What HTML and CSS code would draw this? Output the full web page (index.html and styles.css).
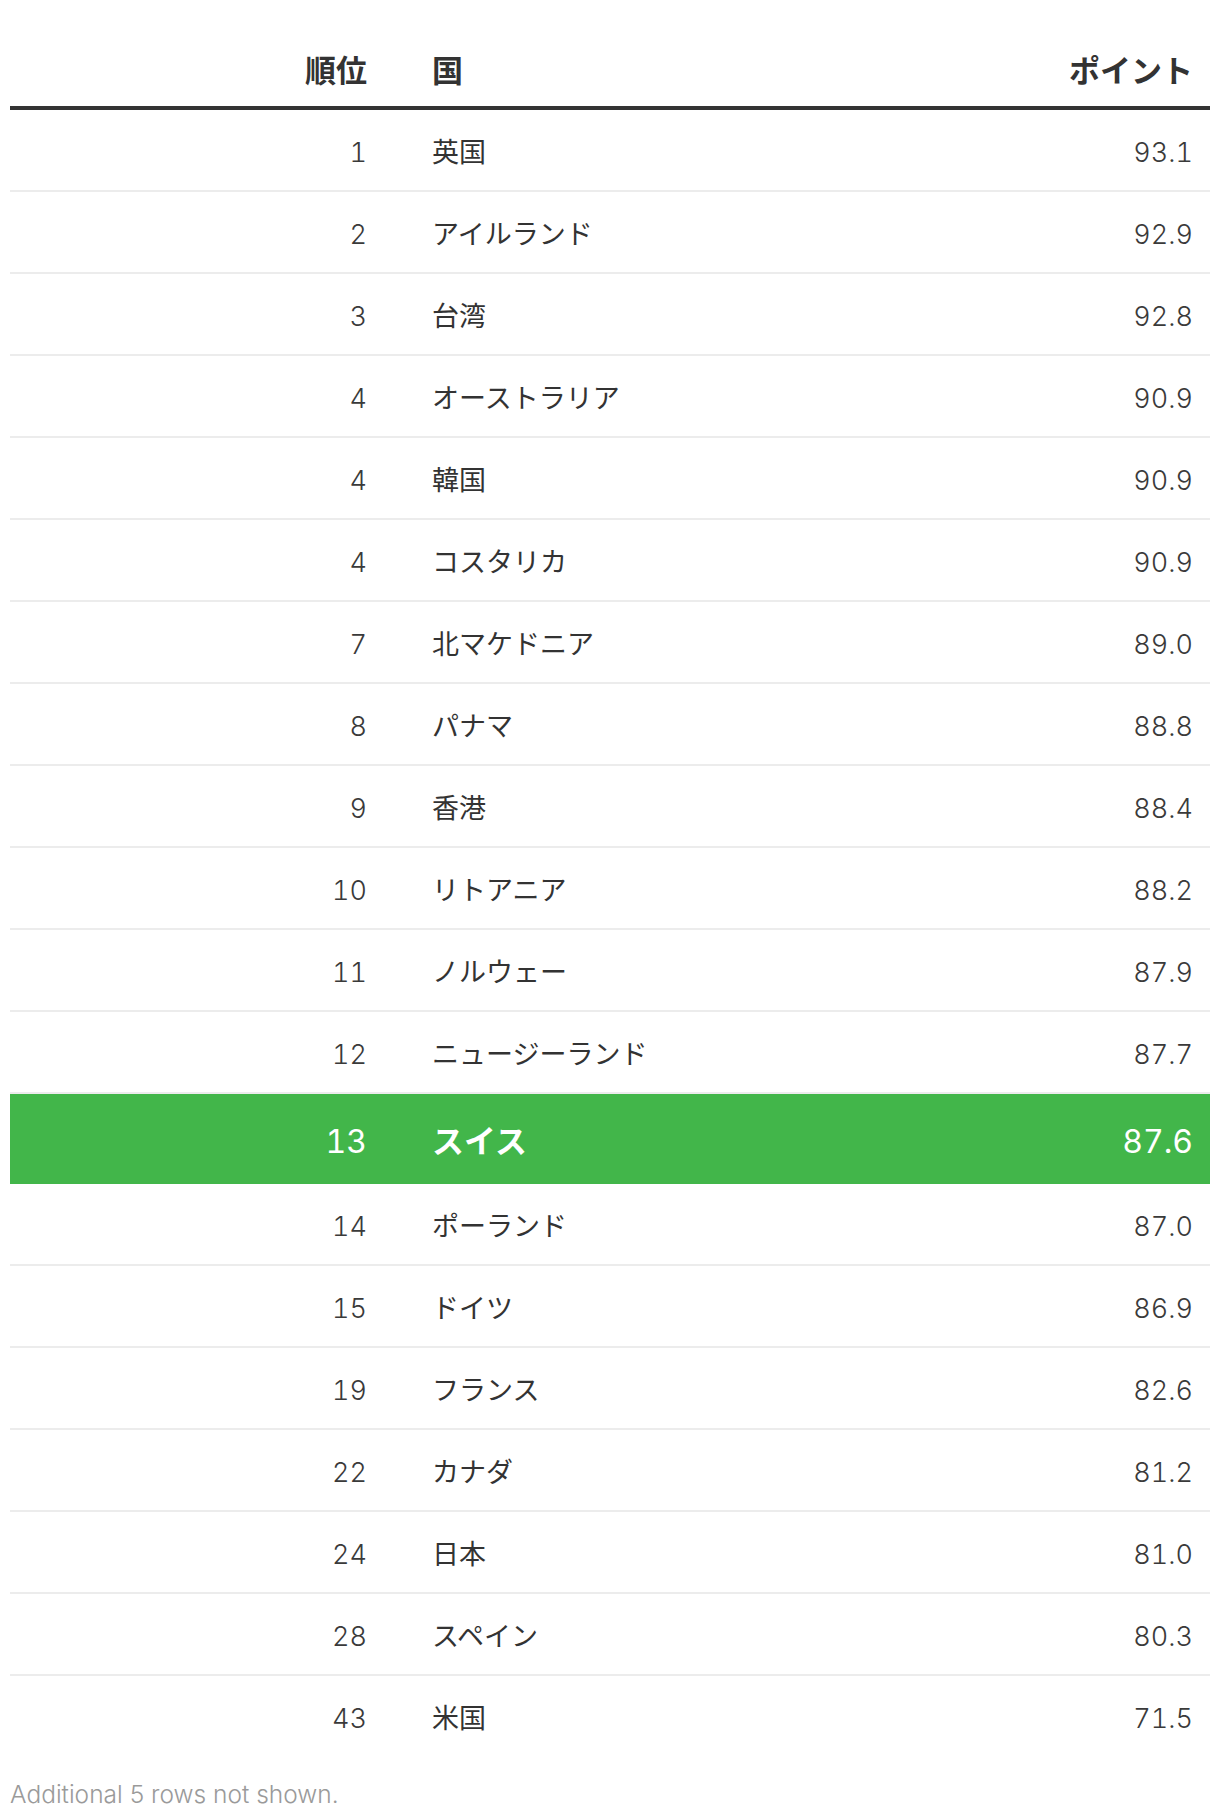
FILE: index.html
```html
<!DOCTYPE html>
<html lang="ja">
<head>
<meta charset="utf-8">
<title>ランキング</title>
<link rel="stylesheet" href="styles.css">
</head>
<body>
<div class="wrap">
  <table class="rank-table">
    <thead>
      <tr><th class="c-rank">順位</th><th class="c-country">国</th><th class="c-pts">ポイント</th></tr>
    </thead>
    <tbody>
      <tr><td class="c-rank">1</td><td class="c-country">英国</td><td class="c-pts">93.1</td></tr>
      <tr><td class="c-rank">2</td><td class="c-country">アイルランド</td><td class="c-pts">92.9</td></tr>
      <tr><td class="c-rank">3</td><td class="c-country">台湾</td><td class="c-pts">92.8</td></tr>
      <tr><td class="c-rank">4</td><td class="c-country">オーストラリア</td><td class="c-pts">90.9</td></tr>
      <tr><td class="c-rank">4</td><td class="c-country">韓国</td><td class="c-pts">90.9</td></tr>
      <tr><td class="c-rank">4</td><td class="c-country">コスタリカ</td><td class="c-pts">90.9</td></tr>
      <tr><td class="c-rank">7</td><td class="c-country">北マケドニア</td><td class="c-pts">89.0</td></tr>
      <tr><td class="c-rank">8</td><td class="c-country">パナマ</td><td class="c-pts">88.8</td></tr>
      <tr><td class="c-rank">9</td><td class="c-country">香港</td><td class="c-pts">88.4</td></tr>
      <tr><td class="c-rank">10</td><td class="c-country">リトアニア</td><td class="c-pts">88.2</td></tr>
      <tr><td class="c-rank">11</td><td class="c-country">ノルウェー</td><td class="c-pts">87.9</td></tr>
      <tr><td class="c-rank">12</td><td class="c-country">ニュージーランド</td><td class="c-pts">87.7</td></tr>
      <tr class="hl"><td class="c-rank">13</td><td class="c-country">スイス</td><td class="c-pts">87.6</td></tr>
      <tr><td class="c-rank">14</td><td class="c-country">ポーランド</td><td class="c-pts">87.0</td></tr>
      <tr><td class="c-rank">15</td><td class="c-country">ドイツ</td><td class="c-pts">86.9</td></tr>
      <tr><td class="c-rank">19</td><td class="c-country">フランス</td><td class="c-pts">82.6</td></tr>
      <tr><td class="c-rank">22</td><td class="c-country">カナダ</td><td class="c-pts">81.2</td></tr>
      <tr><td class="c-rank">24</td><td class="c-country">日本</td><td class="c-pts">81.0</td></tr>
      <tr><td class="c-rank">28</td><td class="c-country">スペイン</td><td class="c-pts">80.3</td></tr>
      <tr class="last"><td class="c-rank">43</td><td class="c-country">米国</td><td class="c-pts">71.5</td></tr>
    </tbody>
  </table>
  <p class="note">Additional 5 rows not shown.</p>
</div>
</body>
</html>
```

FILE: styles.css
```css
html, body {
  margin: 0;
  padding: 0;
  background: #ffffff;
}

body {
  font-family: Inter, "Noto Sans CJK JP", sans-serif;
  color: #333333;
}

.wrap {
  padding: 0 10px;
}

.rank-table {
  width: 1200px;
  border-collapse: collapse;
  table-layout: fixed;
}

.rank-table th {
  height: 108px;
  box-sizing: border-box;
  padding-top: 34px;
  padding-bottom: 0;
  font-size: 31px;
  font-weight: 700;
  color: #333333;
  vertical-align: middle;
  border-bottom: 4px solid #333333;
  line-height: 1;
}

.rank-table td {
  height: 75px;
  padding-top: 5px;
  padding-bottom: 0;
  font-size: 27px;
  font-weight: 300;
  color: #3a3a3a;
  vertical-align: middle;
  border-bottom: 2px solid #ececec;
  line-height: 1;
  font-variant-numeric: tabular-nums;
}

.c-rank {
  width: 374px;
  text-align: right;
  padding-right: 17px;
  padding-left: 0;
}

.c-country {
  text-align: left;
  padding-left: 48px;
  padding-right: 0;
}

.c-pts {
  width: 300px;
  text-align: right;
  padding-right: 17px;
  padding-left: 0;
}

.rank-table td.c-country {
  font-weight: 400;
  color: #333333;
}

.rank-table tr.hl td {
  height: 84px;
  padding-top: 6px;
  background: #42b64a;
  color: #ffffff;
  font-size: 32px;
  font-weight: 400;
  border-bottom: 0;
}

.rank-table tr.hl td.c-country {
  font-weight: 700;
}

.rank-table tr.last td {
  border-bottom: 0;
}

.note {
  margin: 26px 0 0 0;
  font-family: Inter, sans-serif;
  font-size: 24.5px;
  font-weight: 300;
  color: #9a9a9a;
  line-height: 1;
}
```
